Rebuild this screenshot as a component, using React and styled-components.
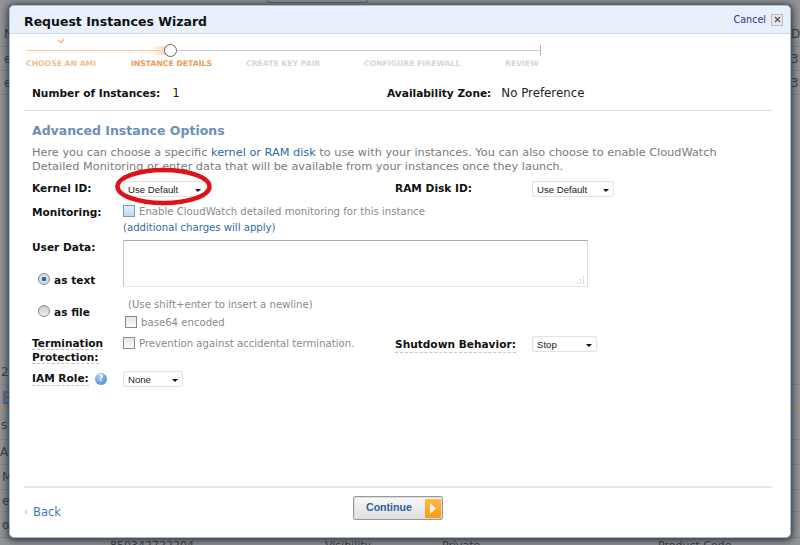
import React from "react";
import styled, { createGlobalStyle } from "styled-components";

const Global = createGlobalStyle`
  html, body { margin: 0; padding: 0; background: #929496; }
  #root { width: 800px; height: 545px; overflow: hidden; }
`;
const Page = styled.div`
  position: relative; width: 800px; height: 545px; overflow: hidden;
  background: #929496; font-family: "DejaVu Sans", Verdana, sans-serif;
`;
const Backdrop = styled.div`display: flex; flex-direction: column; height: 545px; color: #3f4143; font-size: 12px;`;
const TopTab = styled.div`
  flex: 0 0 3px; width: 101px; margin-left: 267px; box-sizing: border-box;
  border: 1px solid #6a6c6e; border-top: 0; border-radius: 0 0 5px 5px;
`;
const BackLine = styled.div`
  flex: 0 0 ${p => p.$h}px; box-sizing: border-box; display: flex; align-items: center; justify-content: space-between;
  padding-left: ${p => p.$pad ?? 4}px; white-space: nowrap;
  border-bottom: 1px solid ${p => p.$line || "#86888a"};
`;
const Spacer = styled.div`flex: 0 0 ${p => p.$h}px;`;
const Clip = styled.span`width: 9px; overflow: hidden; flex: none;`;
const BigLetter = styled.span`font-size: 18px; font-weight: bold; color: #5f7488;`;
const BottomLine = styled.div`
  display: grid; grid-template-columns: 215px 117px 216px auto; padding: 1px 0 0 110px; font-size: 11px; line-height: 14px; white-space: nowrap;
`;
const Modal = styled.div`
  position: absolute; left: 9px; top: 5px; width: 782px; height: 533px; box-sizing: border-box;
  background: #fff; border: 1px solid #9fc0d8; border-radius: 5px;
  box-shadow: 0 1px 7px 2px rgba(25,30,35,.75);
  display: flex; flex-direction: column; overflow: hidden;
`;
const Header = styled.div`
  flex: 0 0 27px; display: flex; align-items: center; justify-content: space-between;
  background: #e8f0fb; border-bottom: 1px solid #c8dcf0; padding: 0 7px 0 14px;
`;
const Title = styled.div`font-size: 12.5px; font-weight: bold; color: #111; position: relative; top: 2px;`;
const CancelBox = styled.div`display: flex; align-items: center; gap: 5px;`;
const Cancel = styled.span`font-size: 9.6px; color: #33338f;`;
const CloseBtn = styled.span`
  width: 10px; height: 10px; border: 1px solid #bbb; background: #e8e8e8; display: flex;
  align-items: center; justify-content: center;
`;
const Steps = styled.div`position: relative; height: 48px; margin-left: 17px; width: 514px; flex: none;`;
const Check = styled.svg`position: absolute; left: 30px; top: 4px;`;
const TrackDone = styled.div`position: absolute; left: 0; top: 16px; width: 140px; height: 1px; background: #f6c99a;`;
const Glow = styled.div`position: absolute; left: 124px; top: 12px; width: 16px; height: 9px; background: linear-gradient(90deg, rgba(251,211,168,0), #fbd3a8);`;
const Track = styled.div`position: absolute; left: 140px; top: 16px; right: 0; height: 1px; background: #ccc;`;
const TrackEnd = styled.div`position: absolute; right: 0; top: 11px; width: 1px; height: 11px; background: #bbb;`;
const Dot = styled.div`
  position: absolute; left: 137px; top: 10px; width: 11px; height: 11px; border-radius: 50%;
  background: #fff; border: 1.5px solid #666;
`;
const StepLabel = styled.div`
  position: absolute; left: ${p => p.$x}px; top: 25px; font-size: 7.7px; font-weight: bold; white-space: nowrap;
  color: ${p => p.$state === "now" ? "#ed9b4f" : p.$state === "done" ? "#f4bd8c" : "#d6d6d6"};
`;
const Summary = styled.div`
  flex: none; margin-left: 14px; width: 748px; height: 29px; box-sizing: border-box; border-bottom: 1px solid #d9d9d9;
  display: flex; align-items: flex-start; padding: 4px 0 0 8px; line-height: 14px;
`;
const Label = styled.span`font-weight: bold; color: #111; font-size: 10.6px; line-height: 14px; display: block;`;
const Value = styled.span`color: #222; font-size: 11.8px;`;
const SummaryPart = styled.div`display: flex; width: ${p => p.$w || "auto"}; gap: ${p => p.$gap}px;`;
const Body = styled.div`flex: 1; padding: 12px 0 0 22px; position: relative; color: #777;`;
const Heading = styled.div`font-size: 12.5px; font-weight: bold; color: #6a8fbb; line-height: 16px;`;
const Intro = styled.p`margin: 7px 0 0; font-size: 11.3px; line-height: 14px; color: #7a7a7a; white-space: nowrap;`;
const Link = styled.span`color: #2e6aa8;`;
const Row = styled.div`
  display: grid; grid-template-columns: 91px 272px 137px auto; align-items: start; margin-top: ${p => p.$mt}px;
`;
const TwoCol = styled.div`display: flex; align-items: ${p => p.$center ? "center" : "flex-start"}; margin-top: ${p => p.$mt}px;`;
const Left = styled.div`width: 91px; flex: none; font-size: 10.6px; line-height: 13.5px;`;
const IconLabel = styled(Left)`display: flex; align-items: center;`;
const Sel = styled.div`
  width: ${p => p.$w}px; height: 16px; box-sizing: border-box; border: 1px solid #e3e3e3; border-radius: 2px;
  box-shadow: inset 0 0 1px #ddd; margin-top: ${p => p.$mt || 0}px;
  display: flex; align-items: center; justify-content: space-between; background: #fff;
  padding: 0 4px 0 4px; font: 9.6px "Liberation Sans", Arial, sans-serif; color: #222;
`;
const Arrow = styled.i`width: 0; height: 0; border: 3.5px solid transparent; border-top: 3.5px solid #111; border-bottom: 0; margin-top: 3px;`;
const DottedLines = styled.div`font-size: 10.6px; line-height: 13.5px;`;
const Dotted = styled.span`
  border-bottom: 1px dashed #c4c4c4; font-weight: bold; color: #111; font-size: 10.6px; line-height: 13.5px; justify-self: start;
  margin-top: ${p => p.$mt || 0}px;
`;
const Check2 = styled.span`
  flex: none; display: inline-block; width: 10px; height: 10px; border: 1px solid ${p => p.$blue ? "#6d9cc4" : "#8a8a8a"};
  background: ${p => p.$blue ? "linear-gradient(#e6f1fa,#bcd8ee)" : "linear-gradient(#e6e6e6,#fafafa)"};
`;
const CheckLine = styled.div`
  display: flex; align-items: flex-start; gap: 4px; font-size: 10.15px; line-height: 14px; color: #8a8a8a;
  margin: ${p => p.$mt || 0}px 0 0 ${p => p.$ml || 0}px;
`;
const Charges = styled.div`font-size: 10.15px; line-height: 13px; color: #2e6aa8; margin-top: 2px;`;
const TextArea = styled.div`
  width: 463px; height: 45px; border: 1px solid #c8c8c8; border-top-color: #aaa; border-bottom-color: #e4e4e4; border-right-color: #e0e0e0;
  position: relative; background: #fff;
`;
const Grip = styled.svg`position: absolute; right: 2px; bottom: 2px;`;
const Radio = styled.div`
  display: flex; align-items: center; gap: 4px; margin: ${p => p.$mt}px 0 0 6px;
  font-size: 10.6px; line-height: 14px; font-weight: bold; color: #111;
`;
const RadioDot = styled.span`
  width: 10px; height: 10px; border-radius: 50%; border: 1px solid #888; display: inline-block; flex: none; position: relative; top: -1px;
  background: ${p => p.$on ? "radial-gradient(circle,#1a6fa8 0 28%,#d6dde3 36%)" : "linear-gradient(#ccc,#eee)"};
`;
const Hint = styled.div`font-size: 10.15px; line-height: 12px; color: #8a8a8a; margin: 12px 0 0 5px;`;
const Help = styled.span`
  display: inline-flex; width: 12px; height: 12px; border-radius: 50%; align-items: center; justify-content: center;
  background: radial-gradient(circle at 35% 30%,#a7cdf0,#3d7fc4); color: #fff; font-size: 8px; font-weight: bold; margin-left: 6px;
`;
const Ring = styled.svg`position: absolute; left: 104px; top: 55px; pointer-events: none;`;
const Footer = styled.div`
  flex: 0 0 51px; margin-left: 14px; width: 748px; border-top: 2px solid #e6e6e6; box-sizing: border-box;
  display: grid; grid-template-columns: 1fr auto 1fr; align-items: start;
`;
const Back = styled.div`font-size: 11.5px; line-height: 14px; color: #3f78b8; display: flex; gap: 5px; align-items: center; margin-top: 17px;`;
const Chev = styled.span`color: #f0a060; font-size: 10px;`;
const ContinueBtn = styled.div`
  width: 90px; height: 24px; margin: 8px 0 0 0; border: 1px solid #999; border-radius: 2px; box-shadow: 0 0 0 1px #ddd inset;
  background: linear-gradient(#f8f8f8,#e0e0e0); display: flex; align-items: center; justify-content: space-between;
  padding: 0 1px 0 12px; box-sizing: border-box;
  font: bold 10.6px "Liberation Sans", Arial, sans-serif; color: #2a5f9e;
`;
const ContinueText = styled.span`position: relative; top: -1px;`;
const Play = styled.span`
  width: 16px; height: 19px; background: linear-gradient(#ffb84a,#f99a14); display: flex; align-items: center; justify-content: center;
`;

export default function App() {
  return (
    <Page>
      <Global />
      <Backdrop>
        <TopTab />
        <Spacer $h={19} />
        <BackLine $h={25}><span>N</span><Clip>De</Clip></BackLine>
        <BackLine $h={24}><span>e</span><Clip>35</Clip></BackLine>
        <BackLine $h={24}><span>e</span><Clip>35</Clip></BackLine>
        <Spacer $h={265} />
        <BackLine $h={25} $pad={1}><span>2</span></BackLine>
        <BackLine $h={25} $pad={1} $line="#b98a3c"><BigLetter>E</BigLetter></BackLine>
        <BackLine $h={30} $pad={1}><span>s</span></BackLine>
        <BackLine $h={25} $pad={0}><span>AM</span></BackLine>
        <BackLine $h={25} $pad={2}><span>M</span></BackLine>
        <BackLine $h={22} $pad={2}><span>e</span></BackLine>
        <BackLine $h={26} $pad={2}><span>o</span></BackLine>
        <BottomLine>
          <span>850342722204</span>
          <span>Visibility</span>
          <span>Private</span>
          <span>Product Code</span>
        </BottomLine>
      </Backdrop>
      <Modal>
        <Header>
          <Title>Request Instances Wizard</Title>
          <CancelBox>
            <Cancel>Cancel</Cancel>
            <CloseBtn>
              <svg width="7" height="7" viewBox="0 0 7 7"><path d="M1 1l5 5M6 1L1 6" stroke="#555" strokeWidth="1.4" /></svg>
            </CloseBtn>
          </CancelBox>
        </Header>
        <Steps>
          <Check width="8" height="6" viewBox="0 0 8 6"><path d="M1 2l3 2.5L7 1" stroke="#f2b57c" strokeWidth="1.6" fill="none" /></Check>
          <TrackDone /><Glow /><Track /><TrackEnd /><Dot />
          <StepLabel $x={-1} $state="done">CHOOSE AN AMI</StepLabel>
          <StepLabel $x={104} $state="now">INSTANCE DETAILS</StepLabel>
          <StepLabel $x={219} $state="todo">CREATE KEY PAIR</StepLabel>
          <StepLabel $x={337} $state="todo">CONFIGURE FIREWALL</StepLabel>
          <StepLabel $x={478} $state="todo">REVIEW</StepLabel>
        </Steps>
        <Summary>
          <SummaryPart $w="355px" $gap={12}><Label>Number of Instances:</Label><Value>1</Value></SummaryPart>
          <SummaryPart $gap={10}><Label>Availability Zone:</Label><Value>No Preference</Value></SummaryPart>
        </Summary>
        <Body>
          <Heading>Advanced Instance Options</Heading>
          <Intro>
            Here you can choose a specific <Link>kernel or RAM disk</Link> to use with your instances. You can also choose to enable CloudWatch<br />
            Detailed Monitoring or enter data that will be available from your instances once they launch.
          </Intro>
          <Row $mt={7}>
            <Label>Kernel ID:</Label>
            <Sel $w={83}>Use Default<Arrow /></Sel>
            <Label>RAM Disk ID:</Label>
            <Sel $w={82}>Use Default<Arrow /></Sel>
          </Row>
          <TwoCol $mt={8}>
            <Left><Label>Monitoring:</Label></Left>
            <div>
              <CheckLine><Check2 $blue />Enable CloudWatch detailed monitoring for this instance</CheckLine>
              <Charges>(additional charges will apply)</Charges>
            </div>
          </TwoCol>
          <TwoCol $mt={6}>
            <Left>
              <Label>User Data:</Label>
              <Radio $mt={19}><RadioDot $on />as text</Radio>
              <Radio $mt={18}><RadioDot />as file</Radio>
            </Left>
            <div>
              <TextArea>
                <Grip width="8" height="8" viewBox="0 0 8 8"><path d="M6 1h1M6 4h1M3 4h1M6 7h1M3 7h1M0 7h1" stroke="#aaa" /></Grip>
              </TextArea>
              <Hint>(Use shift+enter to insert a newline)</Hint>
              <CheckLine $mt={5} $ml={2}><Check2 />base64 encoded</CheckLine>
            </div>
          </TwoCol>
          <Row $mt={7}>
            <DottedLines><Dotted>Termination</Dotted><br /><Dotted>Protection:</Dotted></DottedLines>
            <CheckLine><Check2 />Prevention against accidental termination.</CheckLine>
            <Dotted $mt={1}>Shutdown Behavior:</Dotted>
            <Sel $w={65} $mt={-1}>Stop<Arrow /></Sel>
          </Row>
          <TwoCol $mt={7} $center>
            <IconLabel><Dotted>IAM Role:</Dotted><Help>?</Help></IconLabel>
            <Sel $w={60}>None<Arrow /></Sel>
          </TwoCol>
          <Ring width="100" height="42" viewBox="0 0 100 42">
            <ellipse cx="49.5" cy="20.5" rx="46" ry="16.5" fill="none" stroke="#de1218" strokeWidth="4.5" />
          </Ring>
        </Body>
        <Footer>
          <Back><Chev>‹</Chev>Back</Back>
          <ContinueBtn>
            <ContinueText>Continue</ContinueText>
            <Play><svg width="8" height="11" viewBox="0 0 8 11"><path d="M1 0l6 5.5L1 11z" fill="#fff6dd" /></svg></Play>
          </ContinueBtn>
          <span />
        </Footer>
      </Modal>
    </Page>
  );
}
